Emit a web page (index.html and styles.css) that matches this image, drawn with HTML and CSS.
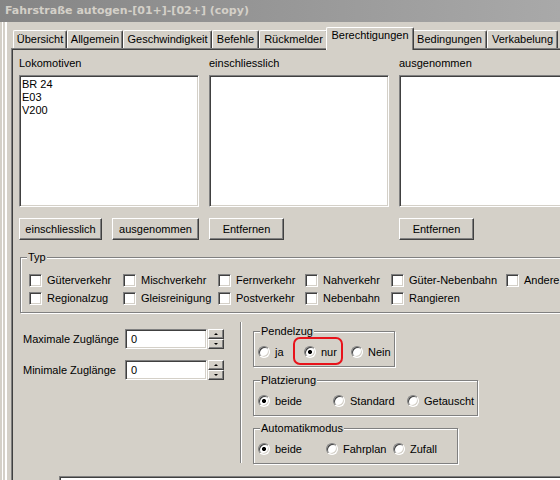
FILE: index.html
```html
<!DOCTYPE html>
<html lang="de">
<head>
<meta charset="utf-8">
<title>Fahrstraße autogen</title>
<link rel="stylesheet" href="styles.css">
</head>
<body>
<div class="titlebar">Fahrstraße autogen-[01+]-[02+] (copy)</div>
<div class="client">
  <div class="tabs">
    <div class="tab t1">Übersicht</div>
    <div class="tab t2">Allgemein</div>
    <div class="tab t3">Geschwindigkeit</div>
    <div class="tab t4">Befehle</div>
    <div class="tab t5">Rückmelder</div>
    <div class="tab t6 active">Berechtigungen</div>
    <div class="tab t7">Bedingungen</div>
    <div class="tab t8">Verkabelung</div>
  </div>
  <div class="panel">
    <div class="lists">
      <div class="col">
        <div class="lbl">Lokomotiven</div>
        <div class="listbox">
          <div class="item">BR 24</div>
          <div class="item">E03</div>
          <div class="item">V200</div>
        </div>
        <div class="btns">
          <button class="btn w83">einschliesslich</button>
          <button class="btn w87">ausgenommen</button>
        </div>
      </div>
      <div class="col">
        <div class="lbl">einschliesslich</div>
        <div class="listbox"></div>
        <div class="btns"><button class="btn w75">Entfernen</button></div>
      </div>
      <div class="col">
        <div class="lbl">ausgenommen</div>
        <div class="listbox"></div>
        <div class="btns"><button class="btn w75">Entfernen</button></div>
      </div>
    </div>

    <fieldset class="group typ">
      <legend>Typ</legend>
      <div class="typgrid">
        <label class="chk"><span class="cb"></span>Güterverkehr</label>
        <label class="chk"><span class="cb"></span>Mischverkehr</label>
        <label class="chk"><span class="cb"></span>Fernverkehr</label>
        <label class="chk"><span class="cb"></span>Nahverkehr</label>
        <label class="chk"><span class="cb"></span>Güter-Nebenbahn</label>
        <label class="chk"><span class="cb"></span>Andere</label>
        <label class="chk"><span class="cb"></span>Regionalzug</label>
        <label class="chk"><span class="cb"></span>Gleisreinigung</label>
        <label class="chk"><span class="cb"></span>Postverkehr</label>
        <label class="chk"><span class="cb"></span>Nebenbahn</label>
        <label class="chk"><span class="cb"></span>Rangieren</label>
      </div>
    </fieldset>

    <div class="lower">
      <div class="lengths">
        <div class="lenrow">
          <span class="lenlabel">Maximale Zuglänge</span>
          <span class="num">0</span>
          <span class="spin"><span class="sbtn"><span class="up"></span></span><span class="sbtn"><span class="down"></span></span></span>
        </div>
        <div class="lenrow">
          <span class="lenlabel">Minimale Zuglänge</span>
          <span class="num">0</span>
          <span class="spin"><span class="sbtn"><span class="up"></span></span><span class="sbtn"><span class="down"></span></span></span>
        </div>
      </div>
      <div class="sep"></div>
      <div class="modes">
        <fieldset class="group g-pendel">
          <legend>Pendelzug</legend>
          <div class="radios">
            <span class="opt o46"><span class="rb"></span>ja</span>
            <span class="opt o47 nur"><span class="rb on"></span>nur<span class="ring"></span></span>
            <span class="opt"><span class="rb"></span>Nein</span>
          </div>
        </fieldset>
        <fieldset class="group g-platz">
          <legend>Platzierung</legend>
          <div class="radios">
            <span class="opt o75"><span class="rb on"></span>beide</span>
            <span class="opt o74"><span class="rb"></span>Standard</span>
            <span class="opt"><span class="rb"></span>Getauscht</span>
          </div>
        </fieldset>
        <fieldset class="group g-auto">
          <legend>Automatikmodus</legend>
          <div class="radios">
            <span class="opt o68"><span class="rb on"></span>beide</span>
            <span class="opt o67"><span class="rb"></span>Fahrplan</span>
            <span class="opt"><span class="rb"></span>Zufall</span>
          </div>
        </fieldset>
      </div>
    </div>
    <div class="bottombox"></div>
  </div>
</div>
</body>
</html>
```
FILE: styles.css
```css
* { box-sizing: border-box; }
html, body { margin: 0; padding: 0; overflow: hidden; }
body {
  width: 560px;
  height: 480px;
  background: #d4d0c8;
  font-family: "Liberation Sans", Arial, sans-serif;
  font-size: 11px;
  color: #000;
}

.titlebar {
  height: 22px;
  background: linear-gradient(to right, #858585, #a9a9a9);
  color: #d4d0c8;
  font-family: "DejaVu Sans", "Liberation Sans", sans-serif;
  font-weight: bold;
  font-size: 11px;
  line-height: 22px;
  padding-left: 5px;
  white-space: nowrap;
}

.client {
  height: 458px;
  padding-top: 5px;
  background: linear-gradient(to right,
    #d4d0c8 0, #d4d0c8 2px, #fff 2px, #fff 3px,
    #d4d0c8 3px, #d4d0c8 5px, #fff 5px, #fff 7px,
    #d4d0c8 7px);
}

/* tabs */
.tabs {
  display: flex;
  align-items: flex-end;
  height: 21px;
  padding-left: 13px;
}
.tab {
  height: 18px;
  line-height: 17px;
  text-align: center;
  white-space: nowrap;
  background: #d4d0c8;
  border-top: 1px solid #fff;
  border-left: 1px solid #fff;
  border-right: 1px solid #404040;
  border-radius: 2px 2px 0 0;
  box-shadow: inset -1px 0 0 #808080;
  flex: none;
}
.t1 { width: 54px; }
.t2 { width: 56px; }
.t3 { width: 89px; }
.t4 { width: 47px; }
.t5 { width: 69px; }
.t6 { width: 84px; }
.t7 { width: 75px; }
.t8 { width: 71px; }
.tab.active {
  height: 23px;
  width: 88px;
  margin: 0 -2px -2px;
  position: relative;
  z-index: 1;
  line-height: 15px;
}

/* panel */
.panel {
  margin-left: 11px;
  height: 432px;
  border-top: 1px solid #808080;
  border-left: 1px solid #808080;
  box-shadow: inset 1px 1px 0 #404040;
  padding: 8px 0 0 7px;
}

.lists {
  display: grid;
  grid-template-columns: 180px 180px 180px;
  column-gap: 10px;
  width: 560px;
}
.lbl {
  height: 13px;
  line-height: 13px;
  margin-bottom: 5px;
}
.listbox {
  height: 132px;
  background: #fff;
  border: 1px solid;
  border-color: #808080 #fff #fff #808080;
  box-shadow: inset 1px 1px 0 #404040, inset -1px -1px 0 #d4d0c8;
  padding: 2px 2px;
}
.item { height: 13px; line-height: 13px; }

.btns {
  display: flex;
  gap: 10px;
  margin-top: 11px;
}
.btn {
  height: 22px;
  padding: 0;
  font: inherit;
  color: #000;
  background: #d4d0c8;
  border: 1px solid;
  border-color: #fff #404040 #404040 #fff;
  box-shadow: inset -1px -1px 0 #808080;
  text-align: center;
  line-height: 20px;
}
.w83 { width: 83px; }
.w87 { width: 87px; }
.w75 { width: 75px; }

/* group boxes */
.group {
  margin: 0;
  padding: 0 0 5px 4px;
  border: 1px solid #808080;
  box-shadow: 1px 1px 0 #fff, inset 1px 1px 0 #fff;
  min-width: 0;
}
.group legend {
  padding: 0 1px;
  margin-left: 2px;
  line-height: 13px;
  background: #d4d0c8;
}

.typ {
  margin: 11px 0 0 1px;
  width: 600px;
  padding-left: 8px;
}
.typ legend { margin-left: -2px; }
.typgrid {
  display: grid;
  grid-template-columns: 94px 95px 87px 86px 115px 80px;
  grid-auto-rows: 18px;
  padding-top: 7px;
}
.chk {
  display: flex;
  align-items: center;
  gap: 5px;
  white-space: nowrap;
}
.cb {
  width: 13px;
  height: 13px;
  flex: none;
  background: #fff;
  border: 1px solid;
  border-color: #808080 #fff #fff #808080;
  box-shadow: inset 1px 1px 0 #404040, inset -1px -1px 0 #d4d0c8;
}

/* lower section */
.lower {
  display: flex;
  height: 152px;
}
.lengths {
  width: 221px;
  padding-top: 16px;
}
.lenrow {
  display: flex;
  align-items: center;
  height: 20px;
  margin-bottom: 11px;
}
.lenlabel {
  width: 106px;
  padding-left: 4px;
  white-space: nowrap;
}
.num {
  width: 82px;
  height: 20px;
  background: #fff;
  border: 1px solid;
  border-color: #808080 #fff #fff #808080;
  box-shadow: inset 1px 1px 0 #404040, inset -1px -1px 0 #d4d0c8;
  padding-left: 5px;
  line-height: 18px;
}
.spin {
  display: flex;
  flex-direction: column;
  margin-left: 1px;
}
.sbtn {
  width: 16px;
  height: 10px;
  background: #d4d0c8;
  border: 1px solid;
  border-color: #fff #404040 #404040 #fff;
  box-shadow: inset -1px -1px 0 #808080;
  display: flex;
  align-items: center;
  justify-content: center;
}
.up, .down { width: 0; height: 0; }
.up {
  border-left: 2px solid transparent;
  border-right: 2px solid transparent;
  border-bottom: 2px solid #000;
}
.down {
  border-left: 2px solid transparent;
  border-right: 2px solid transparent;
  border-top: 2px solid #000;
}

.sep {
  width: 2px;
  height: 141px;
  margin-top: 9px;
  border-left: 1px solid #808080;
  border-right: 1px solid #fff;
}

.modes {
  padding: 12px 0 0 11px;
}
.g-pendel { width: 142px; }
.g-platz { width: 225px; margin-top: 7px; }
.g-auto { width: 205px; margin-top: 6px; }

.radios {
  display: flex;
  height: 18px;
  margin-top: 5px;
}
.opt {
  display: flex;
  align-items: center;
  gap: 5px;
  white-space: nowrap;
}
.o46 { width: 46px; }
.o47 { width: 47px; }
.o75 { width: 75px; }
.o74 { width: 74px; }
.o68 { width: 68px; }
.o67 { width: 67px; }
.rb {
  width: 12px;
  height: 12px;
  flex: none;
  border-radius: 50%;
  background: #fff;
  border: 1px solid;
  border-color: #808080 #fff #fff #808080;
  box-shadow: inset 1px 1px 0 #404040, inset -1px -1px 0 #d4d0c8;
}
.rb.on {
  background: radial-gradient(circle, #000 0, #000 1.8px, #fff 2.3px);
}

.nur { position: relative; }
.ring {
  position: absolute;
  left: -11px;
  top: -6px;
  width: 50px;
  height: 28px;
  border: 2px solid #e8131b;
  border-radius: 7px;
}

.bottombox {
  margin: 11px 0 0 40px;
  height: 30px;
  background: #fff;
  border-top: 1px solid #808080;
  border-left: 1px solid #808080;
  box-shadow: inset 1px 1px 0 #404040;
}
```
